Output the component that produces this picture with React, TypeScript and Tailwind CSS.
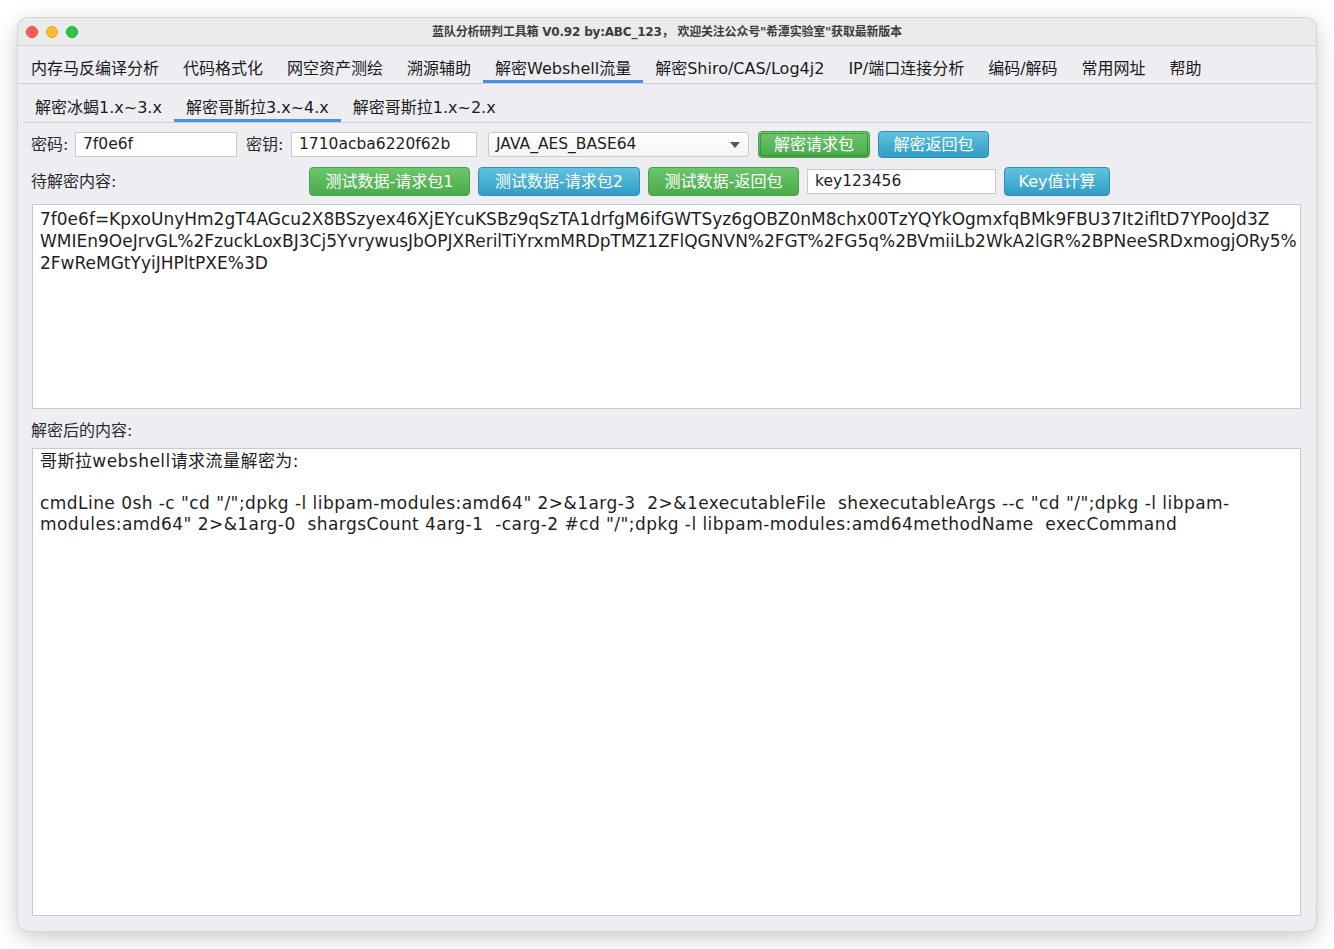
import React from 'react';

const FONT = { fontFamily: '"DejaVu Sans", "Noto Sans CJK SC", sans-serif' };

const MAIN_TABS = [
  '内存马反编译分析',
  '代码格式化',
  '网空资产测绘',
  '溯源辅助',
  '解密Webshell流量',
  '解密Shiro/CAS/Log4j2',
  'IP/端口连接分析',
  '编码/解码',
  '常用网址',
  '帮助',
];

const SUB_TABS = ['解密冰蝎1.x~3.x', '解密哥斯拉3.x~4.x', '解密哥斯拉1.x~2.x'];

const CIPHER_LINES = [
  '7f0e6f=KpxoUnyHm2gT4AGcu2X8BSzyex46XjEYcuKSBz9qSzTA1drfgM6ifGWTSyz6gOBZ0nM8chx00TzYQYkOgmxfqBMk9FBU37It2ifltD7YPooJd3Z',
  'WMIEn9OeJrvGL%2FzuckLoxBJ3Cj5YvrywusJbOPJXRerilTiYrxmMRDpTMZ1ZFlQGNVN%2FGT%2FG5q%2BVmiiLb2WkA2lGR%2BPNeeSRDxmogjORy5%',
  '2FwReMGtYyiJHPltPXE%3D',
];

const PLAIN_LINES = [
  '哥斯拉webshell请求流量解密为:',
  ' ',
  'cmdLine 0sh -c "cd "/";dpkg -l libpam-modules:amd64" 2>&1arg-3  2>&1executableFile  shexecutableArgs --c "cd "/";dpkg -l libpam-',
  'modules:amd64" 2>&1arg-0  shargsCount 4arg-1  -carg-2 #cd "/";dpkg -l libpam-modules:amd64methodName  execCommand',
];

function Field({ value, width }: { value: string; width: string }) {
  return (
    <div className={`${width} shrink-0 h-[25px] bg-white border border-[#c9c9cc] flex items-center px-[7px] pt-[1px] text-[15.5px] text-[#1e1e1e] whitespace-pre`}>
      {value}
    </div>
  );
}

function Btn({ label, color, width, focused }: { label: string; color: 'green' | 'blue'; width: string; focused?: boolean }) {
  const cls =
    color === 'green'
      ? 'bg-gradient-to-b from-[#6cc66c] to-[#4aab4a] border-[#48a248]'
      : 'bg-gradient-to-b from-[#60c2df] to-[#2f9dc5] border-[#2d8fb6]';
  return (
    <div className={`${width} shrink-0 h-full rounded-[4px] border ${cls} flex items-center justify-center text-white text-[16px] p-[1px] whitespace-nowrap`}>
      <div className={`w-full h-full flex items-center justify-center rounded-[3px] ${focused ? 'border border-dotted border-[#2f6b2f]' : ''}`}>
        {label}
      </div>
    </div>
  );
}

export default function App() {
  return (
    <div className="w-[1334px] h-[949px] bg-white pt-[18px] pl-[18px]" style={FONT}>
      <div className="w-[1298px] h-[913px] rounded-[10px] overflow-hidden bg-[#eeedf2] flex flex-col shadow-[0_6px_22px_rgba(0,0,0,0.22)] ring-1 ring-[#d4d4d6]">
        {/* title bar */}
        <div className="h-[28px] shrink-0 bg-[#ebebeb] border-b border-[#d3d3d3] relative flex items-center justify-center">
          <div className="absolute left-[8px] top-[8px] flex gap-[8px]">
            <span className="w-[12px] h-[12px] rounded-full bg-[#fe5f57] border border-[#e2463f]" />
            <span className="w-[12px] h-[12px] rounded-full bg-[#febc2e] border border-[#dea123]" />
            <span className="w-[12px] h-[12px] rounded-full bg-[#28c840] border border-[#1aab29]" />
          </div>
          <span className="text-[12px] font-bold text-[#3c3c3c] tracking-[-0.2px]">
            蓝队分析研判工具箱 V0.92 by:ABC_123， 欢迎关注公众号"希潭实验室"获取最新版本
          </span>
        </div>

        {/* main tabs */}
        <div className="h-[38px] shrink-0 border-b border-[#d0d0d4] flex pl-[1px]">
          {MAIN_TABS.map((t, i) => (
            <div
              key={t}
              className={`h-full px-[12px] pt-[12px] flex items-center text-[16px] text-[#1a1a1a] border-b-[3px] whitespace-nowrap ${i === 4 ? 'border-[#4a90e2]' : 'border-transparent'}`}
            >
              {t}
            </div>
          ))}
        </div>

        {/* sub tabs */}
        <div className="h-[39px] shrink-0 mx-[5px] border-b border-[#d0d0d4] flex">
          {SUB_TABS.map((t, i) => (
            <div
              key={t}
              className={`h-full px-[12px] pt-[13px] flex items-center text-[16px] text-[#1a1a1a] border-b-[3px] whitespace-nowrap ${i === 1 ? 'border-[#4a90e2]' : 'border-transparent'}`}
            >
              {t}
            </div>
          ))}
        </div>

        {/* body */}
        <div className="flex-1 flex flex-col pl-[13px] pr-[15px] pt-[8px] pb-[15px]">
          <div className="h-[27px] flex items-center gap-[8px] text-[16px] text-[#2a2a2a]">
            <span className="w-[36px] shrink-0 whitespace-nowrap pt-[1px]">密码:</span>
            <Field value="7f0e6f" width="w-[162px]" />
            <span className="w-[37px] shrink-0 ml-[1px] whitespace-nowrap pt-[1px]">密钥:</span>
            <Field value="1710acba6220f62b" width="w-[186px]" />
            <div className="ml-[3px] w-[261px] shrink-0 h-[25px] bg-gradient-to-b from-white to-[#f4f4f4] border border-[#c9c9cc] rounded-[3px] flex items-center justify-between px-[7px] pt-[1px] text-[15.5px] text-[#1e1e1e]">
              <span>JAVA_AES_BASE64</span>
              <svg width="10" height="6" viewBox="0 0 10 6" className="mr-[1px]">
                <path d="M0 0 L10 0 L5 6 Z" fill="#555" />
              </svg>
            </div>
            <div className="h-[27px] flex gap-[8px] ml-[1px]">
              <Btn label="解密请求包" color="green" width="w-[112px]" focused />
              <Btn label="解密返回包" color="blue" width="w-[111px]" />
            </div>
          </div>

          <div className="h-[29px] mt-[9px] flex items-center gap-[8px] text-[16px] text-[#2a2a2a]">
            <span className="w-[270px] shrink-0 whitespace-nowrap">待解密内容:</span>
            <div className="h-[29px] flex gap-[8px]">
              <Btn label="测试数据-请求包1" color="green" width="w-[161px]" />
              <Btn label="测试数据-请求包2" color="blue" width="w-[162px]" />
              <Btn label="测试数据-返回包" color="green" width="w-[151px]" />
            </div>
            <Field value="key123456" width="w-[189px]" />
            <div className="h-[29px] flex">
              <Btn label="Key值计算" color="blue" width="w-[106px]" />
            </div>
          </div>

          <div className="mt-[8px] ml-[1px] h-[205px] shrink-0 bg-white border border-[#c9c9cc] px-[7px] pt-[3px] overflow-hidden text-[17px] leading-[22px] text-[#1e1e1e]">
            {CIPHER_LINES.map((l, i) => (
              <div key={i} className="whitespace-pre">{l}</div>
            ))}
          </div>

          <div className="h-[39px] shrink-0 flex items-center text-[16px] text-[#2a2a2a] pt-[4px]">解密后的内容:</div>

          <div className="flex-1 ml-[1px] bg-white border border-[#c9c9cc] px-[7px] pt-[2px] overflow-hidden text-[17px] leading-[21px] text-[#1e1e1e] tracking-[0.45px]">
            {PLAIN_LINES.map((l, i) => (
              <div key={i} className="whitespace-pre">{l}</div>
            ))}
          </div>
        </div>
      </div>
    </div>
  );
}
